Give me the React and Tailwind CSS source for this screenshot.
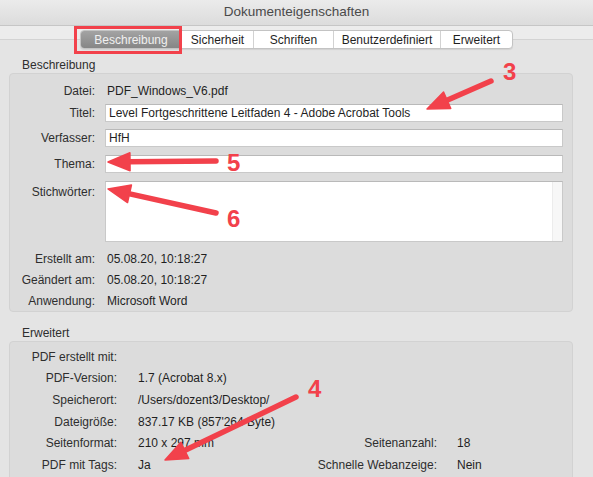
import React from 'react'

const FONT = { fontFamily: '"Liberation Sans", Arial, sans-serif' }

const tabs = ['Beschreibung', 'Sicherheit', 'Schriften', 'Benutzerdefiniert', 'Erweitert']
const tabWidths = ['w-[100px]', 'w-[72px]', 'w-[80px]', 'w-[107px]', 'w-[72px]']

// red annotation arrow: tail -> tip
const Arrow = ({ x1, y1, x2, y2 }) => {
  const dx = x2 - x1
  const dy = y2 - y1
  const len = Math.hypot(dx, dy)
  const ux = dx / len
  const uy = dy / len
  const hl = 22
  const hw = 9
  const bx = x2 - ux * hl
  const by = y2 - uy * hl
  const pts = `${x2},${y2} ${bx - uy * hw},${by + ux * hw} ${bx + uy * hw},${by - ux * hw}`
  return (
    <g>
      <line x1={x1} y1={y1} x2={bx + ux * 2} y2={by + uy * 2} stroke="#f2414b" strokeWidth="5.5" strokeLinecap="round" />
      <polygon points={pts} fill="#f2414b" stroke="#f2414b" strokeWidth="1.5" strokeLinejoin="round" />
    </g>
  )
}

const Field = ({ children }) => (
  <div className="flex-1 h-[18px] bg-white border border-[#c9c9c9] border-t-[#b9b9b9] flex items-center pl-[3px] text-[12px] text-[#1f1f1f]">
    {children}
  </div>
)

const Row = ({ label, children, className = 'h-[18px]' }) => (
  <div className={`flex items-center ${className}`}>
    <div className="w-[85px] shrink-0 text-right text-[12px] text-[#2e2e2e]">{label}</div>
    <div className="ml-[10px] flex-1 flex items-center">{children}</div>
  </div>
)

const InfoRow = ({ label, value }) => (
  <div className="flex items-center h-[21px]">
    <div className="w-[85px] shrink-0 text-right text-[12px] text-[#2e2e2e]">{label}</div>
    <div className="ml-[12px] text-[12px] text-[#1f1f1f]">{value}</div>
  </div>
)

const ExtRow = ({ label, value, rLabel, rValue }) => (
  <div className="flex items-center h-[21.6px] text-[12px]">
    <div className="w-[107px] shrink-0 text-right text-[#2e2e2e]">{label}</div>
    <div className="ml-[21px] w-[172px] shrink-0 text-[#1f1f1f]">{value}</div>
    {rLabel && <div className="w-[127px] shrink-0 text-right text-[#2e2e2e]">{rLabel}</div>}
    {rValue && <div className="ml-[20px] text-[#1f1f1f]">{rValue}</div>}
  </div>
)

export default function App() {
  return (
    <div className="relative w-[593px] h-[477px] overflow-hidden bg-[#e5e5e5]" style={FONT}>
      {/* title bar */}
      <div className="h-[26px] flex items-center justify-center bg-gradient-to-b from-[#ebebeb] to-[#dcdcdc] border-b border-[#c6c6c6] text-[13.5px] text-[#4a4a4a]">
        Dokumenteigenschaften
      </div>

      <div className="bg-[#ececec] pt-[4px]">
        {/* segmented tabs */}
        <div className="relative z-10 flex justify-center -mb-[10px]">
          <div className="flex h-[19px] rounded-[4px] border border-[#c3c3c3] bg-white shadow-[0_1px_1px_rgba(0,0,0,0.08)]">
            {tabs.map((t, i) => (
              <div
                key={t}
                className={`${tabWidths[i]} flex items-center justify-center text-[12px] ${
                  i === 0
                    ? 'bg-gradient-to-b from-[#a3a3a3] to-[#868686] text-[#f0f0f0] rounded-l-[3px]'
                    : 'text-[#1f1f1f] border-l border-[#d2d2d2]'
                }`}
              >
                {t}
              </div>
            ))}
          </div>
        </div>
      </div>

      {/* tab content */}
      <div className="border-t border-[#d3d3d3] bg-[#e4e4e4] pl-[9px] pr-[20px] pt-[18px]">
        <div className="h-[15px] leading-[15px] pl-[13px] text-[12px] text-[#2e2e2e]">Beschreibung</div>
        <div className="rounded-[4px] border border-[#d2d2d2] bg-[#dcdcdc] pr-[9px] pt-[6px]">
          <InfoRow label="Datei:" value="PDF_Windows_V6.pdf" />
          <div className="mt-[3px]">
            <Row label="Titel:">
              <Field>Level Fortgeschrittene Leitfaden 4 - Adobe Acrobat Tools</Field>
            </Row>
          </div>
          <div className="mt-[7px]">
            <Row label="Verfasser:">
              <Field>HfH</Field>
            </Row>
          </div>
          <div className="mt-[8px]">
            <Row label="Thema:">
              <Field />
            </Row>
          </div>
          <div className="mt-[8px] flex">
            <div className="w-[85px] shrink-0 text-right text-[12px] text-[#2e2e2e] pt-[2px]">Stichwörter:</div>
            <div className="ml-[10px] flex-1 h-[61px] bg-white border border-[#c9c9c9] border-t-[#b9b9b9] flex justify-end">
              <div className="w-[10px] h-full bg-[#f7f7f7] border-l border-[#ececec]" />
            </div>
          </div>
          <div className="mt-[6px]">
            <InfoRow label="Erstellt am:" value="05.08.20, 10:18:27" />
            <InfoRow label="Geändert am:" value="05.08.20, 10:18:27" />
            <InfoRow label="Anwendung:" value="Microsoft Word" />
          </div>
        </div>

        <div className="mt-[14px] h-[15px] leading-[15px] pl-[13px] text-[12px] text-[#2e2e2e]">Erweitert</div>
        <div className="rounded-[4px] border border-[#d2d2d2] bg-[#dcdcdc] pt-[4px] h-[140px]">
          <ExtRow label="PDF erstellt mit:" value="" />
          <ExtRow label="PDF-Version:" value="1.7 (Acrobat 8.x)" />
          <ExtRow label="Speicherort:" value="/Users/dozent3/Desktop/" />
          <ExtRow label="Dateigröße:" value="837.17 KB (857'264 Byte)" />
          <ExtRow label="Seitenformat:" value="210 x 297 mm" rLabel="Seitenanzahl:" rValue="18" />
          <ExtRow label="PDF mit Tags:" value="Ja" rLabel="Schnelle Webanzeige:" rValue="Nein" />
        </div>
      </div>

      {/* red selection frame on first tab */}
      <div className="absolute left-[74px] top-[26px] w-[108px] h-[28px] border-[3px] border-[#f2414b] z-20" />

      {/* annotations */}
      <svg className="absolute inset-0 z-20 pointer-events-none" width="593" height="477">
        <Arrow x1={491} y1={81} x2={427} y2={109} />
        <Arrow x1={216} y1={161} x2={108} y2={162} />
        <Arrow x1={216} y1={213} x2={108} y2={189} />
        <Arrow x1={296} y1={397} x2={165} y2={460} />
      </svg>
      <div className="absolute z-20 left-[503px] top-[60px] text-[24px] leading-none font-bold text-[#f2414b]">3</div>
      <div className="absolute z-20 left-[227px] top-[151px] text-[24px] leading-none font-bold text-[#f2414b]">5</div>
      <div className="absolute z-20 left-[227px] top-[207px] text-[24px] leading-none font-bold text-[#f2414b]">6</div>
      <div className="absolute z-20 left-[308px] top-[377px] text-[24px] leading-none font-bold text-[#f2414b]">4</div>
    </div>
  )
}
